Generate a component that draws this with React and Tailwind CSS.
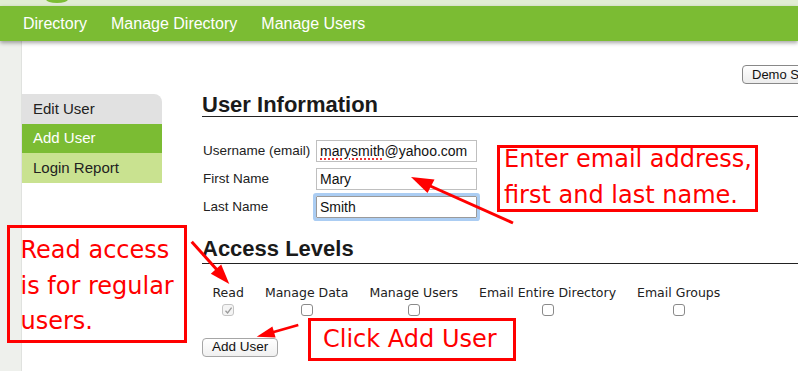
import React from "react";

const sans = { fontFamily: '"Liberation Sans", Arial, sans-serif' };
const dv = { fontFamily: '"DejaVu Sans", Verdana, sans-serif' };

function Check({ checked }) {
  return (
    <div className={`w-[12px] h-[12px] rounded-[3px] border ${checked ? "border-[#c4c4c4] bg-[#f4f4f4]" : "border-[#8a8a8a] bg-white"} flex items-center justify-center`}>
      {checked && (
        <svg width="9" height="9" viewBox="0 0 9 9">
          <path d="M1.5 4.8 L3.6 7 L7.6 1.6" fill="none" stroke="#9a9a9a" strokeWidth="1.3" />
        </svg>
      )}
    </div>
  );
}

function Access({ label, checked }) {
  return (
    <div className="flex flex-col items-center px-[10.5px]">
      <div className="text-[12.5px] leading-[15px] text-[#222] whitespace-nowrap" style={dv}>{label}</div>
      <div className="mt-[4px]"><Check checked={checked} /></div>
    </div>
  );
}

export default function App() {
  return (
    <div className="relative w-[798px] h-[371px] overflow-hidden bg-white" style={sans}>
      {/* top strip */}
      <div className="relative h-[6px] bg-[#e1edd3]">
        <div className="absolute left-[46px] top-[-4px] w-[22px] h-[7px] rounded-[50%] bg-[#7cbd34]" />
      </div>
      {/* nav */}
      <div className="relative z-10 h-[35px] bg-[#7bbc33] shadow-[0_2px_4px_rgba(0,0,0,0.35)] flex items-center pl-[23px] gap-[24px] text-white text-[16px]">
        <span>Directory</span>
        <span>Manage Directory</span>
        <span>Manage Users</span>
      </div>
      {/* body */}
      <div className="flex h-[330px]">
        <div className="w-[22px] shrink-0 bg-[#eef0ec] border-r border-[#e0e2df]" />
        <div className="flex-1 flex flex-col min-w-0">
          <div className="flex pl-[720px] pt-[24px] whitespace-nowrap">
            <div className="flex shrink-0 items-center h-[19px] px-[9px] border border-[#888] rounded-[4px] bg-gradient-to-b from-white to-[#ececec] text-[13px] text-[#111]">Demo Site</div>
          </div>
          <div className="flex mt-[10px]">
            {/* sidebar */}
            <div className="w-[140px] shrink-0 rounded-r-[8px] overflow-hidden text-[15px] text-[#222]">
              <div className="h-[30px] bg-[#e1e1e1] flex items-center pl-[11px]">Edit User</div>
              <div className="h-[29px] bg-[#7bbc33] text-white flex items-center pl-[11px]">Add User</div>
              <div className="h-[30px] bg-[#c9e290] flex items-center pl-[11px]">Login Report</div>
            </div>
            {/* main */}
            <div className="flex-1 ml-[40px]">
              <div className="text-[22px] leading-[22px] font-bold text-[#1a1a1a] border-b border-[#222]">User Information</div>
              <div className="mt-[23px] flex flex-col gap-[6px] text-[13.5px] text-[#222]">
                <div className="flex items-center h-[22px]">
                  <div className="w-[114px] pl-px">Username (email)</div>
                  <div className="w-[161px] h-[22px] border border-[#bfbfbf] px-[3px] flex items-center text-[14px] text-[#111]">
                    <span className="underline decoration-dotted decoration-[#e33] decoration-2 underline-offset-[3px]">marysmith</span>@yahoo.com
                  </div>
                </div>
                <div className="flex items-center h-[22px]">
                  <div className="w-[114px] pl-px">First Name</div>
                  <div className="w-[161px] h-[22px] border border-[#bfbfbf] px-[3px] flex items-center text-[14px] text-[#111]">Mary</div>
                </div>
                <div className="flex items-center h-[22px]">
                  <div className="w-[114px] pl-px">Last Name</div>
                  <div className="w-[161px] h-[22px] border border-[#9a9a9a] rounded-[1px] shadow-[0_0_0_3px_#abcdf3] px-[3px] flex items-center text-[14px] text-[#111]">Smith</div>
                </div>
              </div>
              <div className="mt-[20px] pb-[3px] text-[22px] leading-[22px] font-bold text-[#1a1a1a] border-b border-[#222]">Access Levels</div>
              <div className="mt-[21px] flex">
                <Access label="Read" checked />
                <Access label="Manage Data" />
                <Access label="Manage Users" />
                <Access label="Email Entire Directory" />
                <Access label="Email Groups" />
              </div>
              <div className="mt-[22px] flex">
                <div className="flex items-center h-[19px] px-[9px] border border-[#a6a6a6] rounded-[4px] bg-gradient-to-b from-white to-[#f0f0f0] text-[13.5px] text-[#111]">Add User</div>
              </div>
            </div>
          </div>
        </div>
      </div>

      {/* annotations */}
      <div className="absolute left-[497px] top-[145px] w-[261px] h-[67px] border-[3px] border-[#ff0000] text-[#ff0000] text-[24px] leading-[36px] whitespace-nowrap" style={dv}>
        <div className="-mt-[7px] pl-[4px]">Enter email address,<br />first and last name.</div>
      </div>
      <div className="absolute left-[7px] top-[225px] w-[180px] h-[118px] border-[3px] border-[#ff0000] text-[#ff0000] text-[24px] leading-[35.7px] whitespace-nowrap" style={dv}>
        <div className="pt-[5px] pl-[10.5px]">Read access<br />is for regular<br />users.</div>
      </div>
      <div className="absolute left-[308px] top-[318px] w-[208px] h-[43px] border-[3px] border-[#ff0000] bg-white text-[#ff0000] text-[24px] leading-[36px] whitespace-nowrap" style={dv}>
        <div className="pl-[12px]">Click Add User</div>
      </div>

      <svg className="absolute left-0 top-0 pointer-events-none" width="798" height="371">
        <line x1="513" y1="223" x2="428" y2="185" stroke="#ff0000" strokeWidth="3" />
        <polygon points="411,177 434.5,179.5 427.5,193" fill="#ff0000" />
        <line x1="191.7" y1="241.7" x2="218" y2="271" stroke="#ff0000" strokeWidth="3" />
        <polygon points="229.3,284 210.8,273.7 221.2,264.4" fill="#ff0000" />
        <line x1="298.3" y1="325" x2="272" y2="332.5" stroke="#ff0000" strokeWidth="2.5" />
        <polygon points="256.7,336.7 272.4,326.5 275.6,337.6" fill="#ff0000" />
      </svg>
    </div>
  );
}
